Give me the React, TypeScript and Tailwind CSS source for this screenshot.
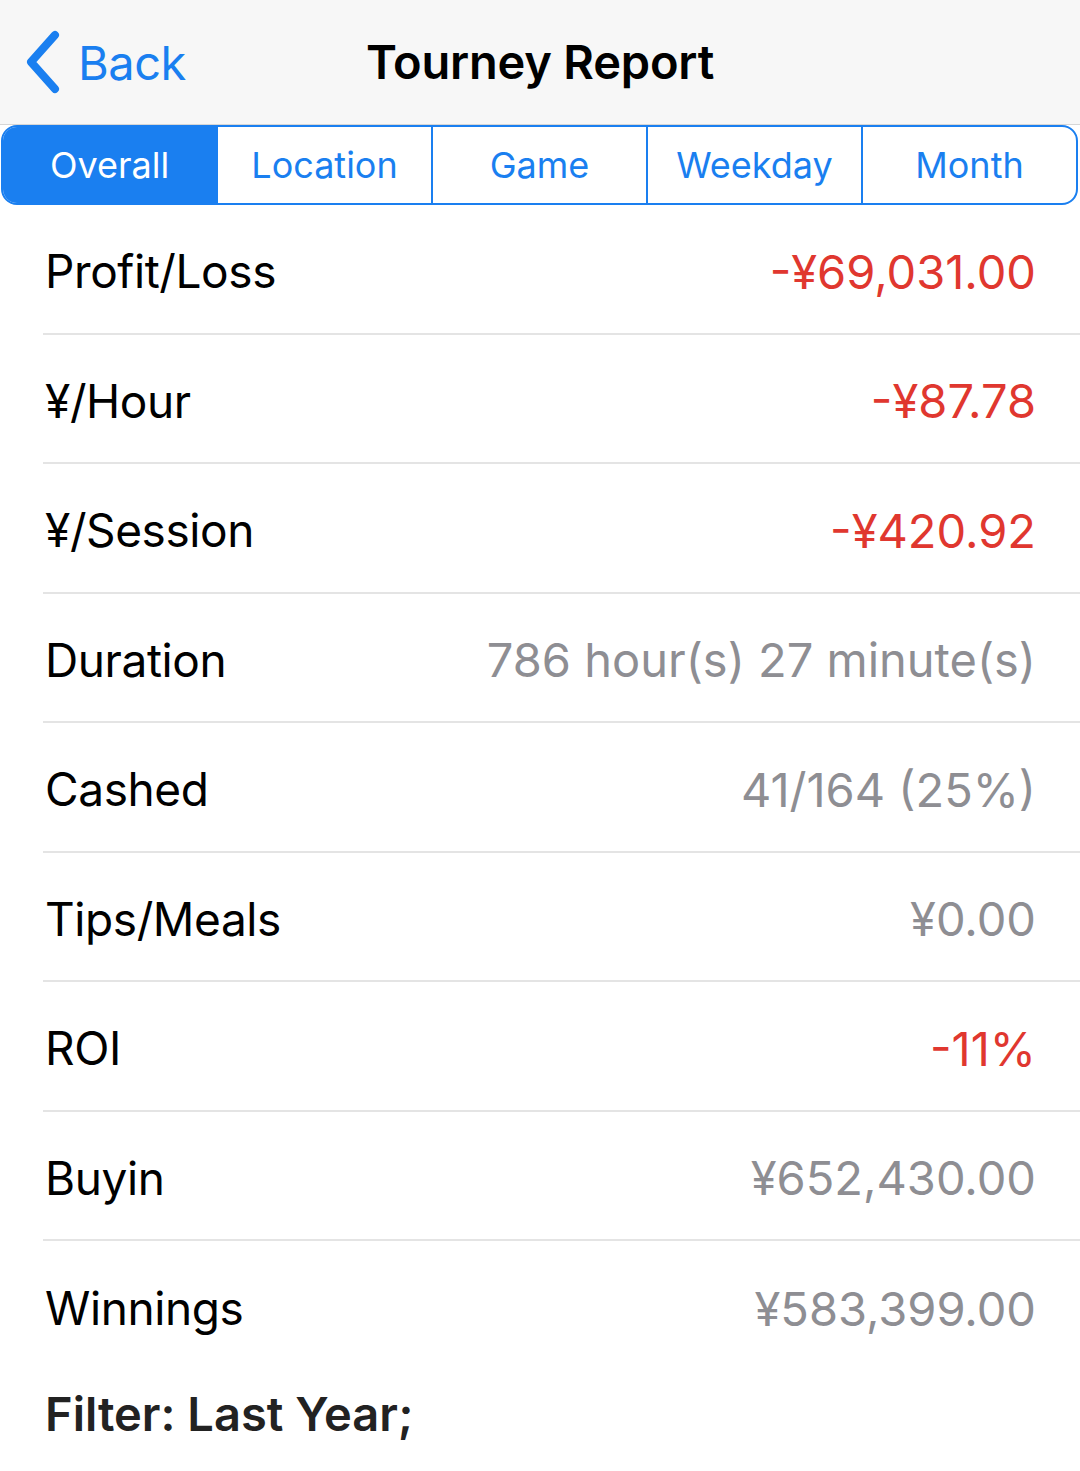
import React from "react";

const rows: { label: string; value: string; red?: boolean }[] = [
  { label: "Profit/Loss", value: "-¥69,031.00", red: true },
  { label: "¥/Hour", value: "-¥87.78", red: true },
  { label: "¥/Session", value: "-¥420.92", red: true },
  { label: "Duration", value: "786 hour(s) 27 minute(s)" },
  { label: "Cashed", value: "41/164 (25%)" },
  { label: "Tips/Meals", value: "¥0.00" },
  { label: "ROI", value: "-11%", red: true },
  { label: "Buyin", value: "¥652,430.00" },
  { label: "Winnings", value: "¥583,399.00" },
];

const tabs = ["Overall", "Location", "Game", "Weekday", "Month"];

export default function App() {
  return (
    <div
      className="w-[1080px] h-[1471px] bg-white overflow-hidden"
      style={{ fontFamily: "Inter, 'Noto Sans', sans-serif" }}
    >
      <div className="h-[125px] bg-[#f7f7f7] border-b border-[#d6d6d6] flex items-center relative">
        <div className="absolute left-[23px] top-[30px] flex items-center">
          <svg width="40" height="64" viewBox="0 0 40 64" fill="none">
            <path d="M32 5 L8 32 L32 59" stroke="#1a7ff0" strokeWidth="8" strokeLinecap="round" strokeLinejoin="round" />
          </svg>
          <span className="ml-[15px] text-[47px] text-[#1a7ff0] leading-none tracking-[-0.5px]">Back</span>
        </div>
        <div className="w-full text-center text-[47px] font-semibold text-black leading-none tracking-[-0.2px] -mt-[2px]">
          Tourney Report
        </div>
      </div>
      <div className="flex h-[80px] mx-[1px] mr-[2px] border-2 border-[#1a7ff0] rounded-[16px] overflow-hidden">
        {tabs.map((t, i) => (
          <div
            key={t}
            className={
              i === 0
                ? "flex-1 flex items-center justify-center bg-[#1a7ff0] text-white text-[36px] leading-none"
                : "flex-1 flex items-center justify-center border-l-2 border-[#1a7ff0] text-[#1a7ff0] text-[36px] leading-none"
            }
          >
            {t}
          </div>
        ))}
      </div>
      <div className="flex flex-col">
        {rows.map((r, i) => (
          <div key={r.label} className="pl-[43px]">
            <div
              className={
                i < rows.length - 1
                  ? "h-[129.5px] flex items-center justify-between pr-[44px] pt-[6px] border-b-2 border-[#e4e4e4]"
                  : "h-[129.5px] flex items-center justify-between pr-[44px] pt-[6px]"
              }
            >
              <span className="text-[46px] text-black ml-[2px] tracking-[-0.4px]">{r.label}</span>
              <span
                className={
                  r.red
                    ? "text-[47px] text-[#e0372f] tracking-[0px]"
                    : "text-[47px] text-[#8e8e93] tracking-[0px]"
                }
              >
                {r.value}
              </span>
            </div>
          </div>
        ))}
        <div className="pl-[45px] pt-[8px] text-[47px] font-semibold text-[#222] tracking-[0px]">
          Filter: Last Year;
        </div>
      </div>
    </div>
  );
}
